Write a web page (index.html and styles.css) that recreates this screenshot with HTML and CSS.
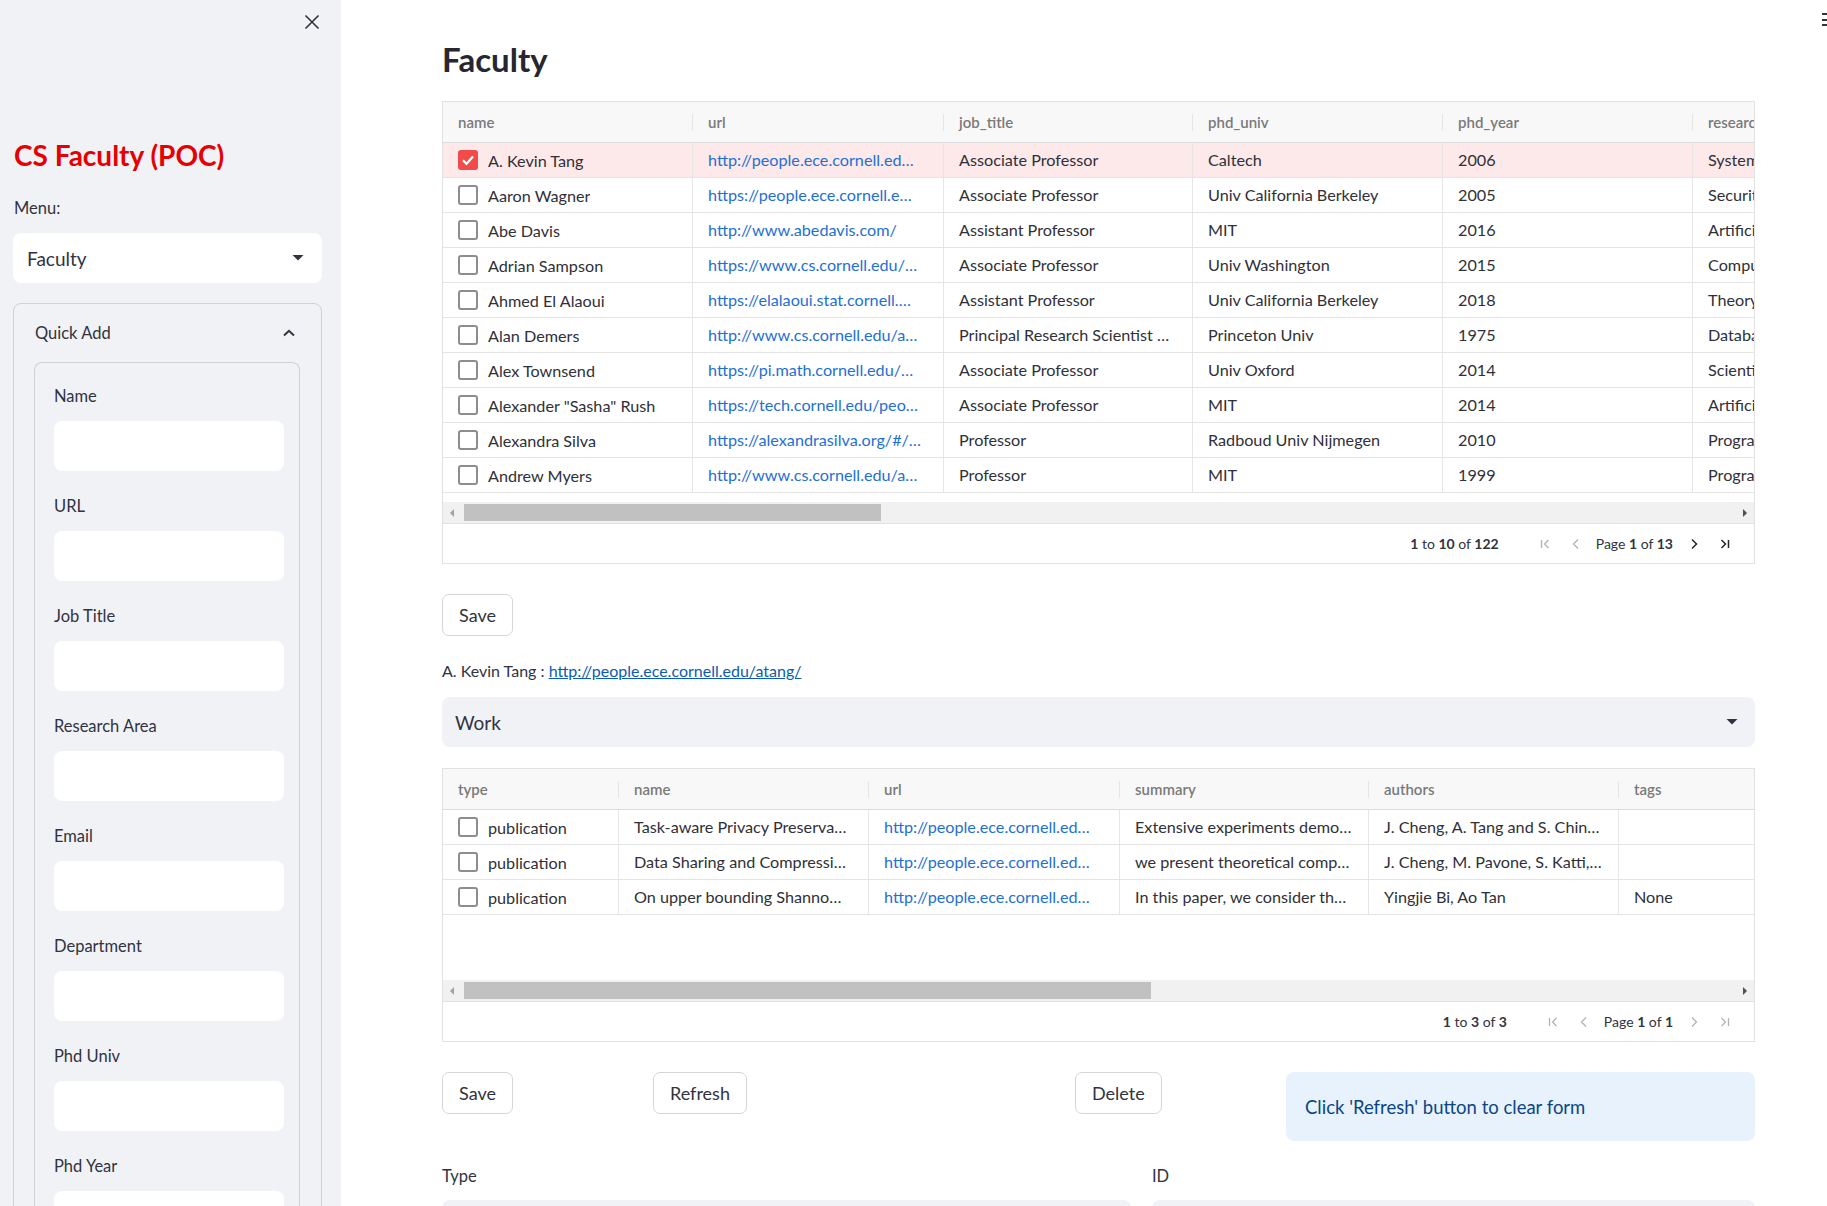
FILE: index.html
```html
<!DOCTYPE html>
<html lang="en">
<head>
<meta charset="utf-8">
<title>Faculty</title>
<link rel="stylesheet" href="styles.css">
</head>
<body>
<div class="app">
  <aside class="sidebar">
    <div class="sb-top">
      <svg class="close" width="16" height="16" viewBox="0 0 16 16"><path d="M1.5 1.5 L14.5 14.5 M14.5 1.5 L1.5 14.5" stroke="#31333f" stroke-width="1.6" fill="none"/></svg>
    </div>
    <h2 class="brand">CS Faculty (POC)</h2>
    <div class="sb-label">Menu:</div>
    <div class="select select-white">
      <span>Faculty</span>
      <svg width="12" height="6" viewBox="0 0 12 6"><path d="M0.5 0 L11.5 0 L6 5.5 Z" fill="#31333f"/></svg>
    </div>
    <div class="expander">
      <div class="exp-head">
        <span>Quick Add</span>
        <svg width="12" height="8" viewBox="0 0 12 8"><path d="M1 6.5 L6 1.8 L11 6.5" stroke="#31333f" stroke-width="2" fill="none"/></svg>
      </div>
      <div class="exp-body">
        <div class="form">
          <div class="field"><div class="field-label">Name</div><div class="input"></div></div>
          <div class="field"><div class="field-label">URL</div><div class="input"></div></div>
          <div class="field"><div class="field-label">Job Title</div><div class="input"></div></div>
          <div class="field"><div class="field-label">Research Area</div><div class="input"></div></div>
          <div class="field"><div class="field-label">Email</div><div class="input"></div></div>
          <div class="field"><div class="field-label">Department</div><div class="input"></div></div>
          <div class="field"><div class="field-label">Phd Univ</div><div class="input"></div></div>
          <div class="field"><div class="field-label">Phd Year</div><div class="input"></div></div>
        </div>
      </div>
    </div>
  </aside>

  <main class="main">
    <div class="menu-icon"><i></i><i></i><i></i></div>
    <h1 class="title">Faculty</h1>

    <div class="grid g1">
      <div class="row head">
        <div class="cell">name</div>
        <div class="cell">url</div>
        <div class="cell">job_title</div>
        <div class="cell">phd_univ</div>
        <div class="cell">phd_year</div>
        <div class="cell">research_area</div>
      </div>
      <div class="viewport">
        <div class="row selected">
          <div class="cell first"><span class="cb checked"><svg width="16" height="16" viewBox="0 0 16 16"><path d="M3 8.3 L6.5 11.8 L13 4.5" stroke="#fff" stroke-width="2.2" fill="none"/></svg></span><span class="txt">A. Kevin Tang</span></div>
          <div class="cell link">http://people.ece.cornell.ed…</div>
          <div class="cell">Associate Professor</div>
          <div class="cell">Caltech</div>
          <div class="cell">2006</div>
          <div class="cell">Systems</div>
        </div>
        <div class="row">
          <div class="cell first"><span class="cb"></span><span class="txt">Aaron Wagner</span></div>
          <div class="cell link">https://people.ece.cornell.e…</div>
          <div class="cell">Associate Professor</div>
          <div class="cell">Univ California Berkeley</div>
          <div class="cell">2005</div>
          <div class="cell">Security</div>
        </div>
        <div class="row">
          <div class="cell first"><span class="cb"></span><span class="txt">Abe Davis</span></div>
          <div class="cell link">http://www.abedavis.com/</div>
          <div class="cell">Assistant Professor</div>
          <div class="cell">MIT</div>
          <div class="cell">2016</div>
          <div class="cell">Artificial Intelligence</div>
        </div>
        <div class="row">
          <div class="cell first"><span class="cb"></span><span class="txt">Adrian Sampson</span></div>
          <div class="cell link">https://www.cs.cornell.edu/…</div>
          <div class="cell">Associate Professor</div>
          <div class="cell">Univ Washington</div>
          <div class="cell">2015</div>
          <div class="cell">Computer Architecture</div>
        </div>
        <div class="row">
          <div class="cell first"><span class="cb"></span><span class="txt">Ahmed El Alaoui</span></div>
          <div class="cell link">https://elalaoui.stat.cornell.…</div>
          <div class="cell">Assistant Professor</div>
          <div class="cell">Univ California Berkeley</div>
          <div class="cell">2018</div>
          <div class="cell">Theory</div>
        </div>
        <div class="row">
          <div class="cell first"><span class="cb"></span><span class="txt">Alan Demers</span></div>
          <div class="cell link">http://www.cs.cornell.edu/a…</div>
          <div class="cell">Principal Research Scientist …</div>
          <div class="cell">Princeton Univ</div>
          <div class="cell">1975</div>
          <div class="cell">Databases</div>
        </div>
        <div class="row">
          <div class="cell first"><span class="cb"></span><span class="txt">Alex Townsend</span></div>
          <div class="cell link">https://pi.math.cornell.edu/…</div>
          <div class="cell">Associate Professor</div>
          <div class="cell">Univ Oxford</div>
          <div class="cell">2014</div>
          <div class="cell">Scientific Computing</div>
        </div>
        <div class="row">
          <div class="cell first"><span class="cb"></span><span class="txt">Alexander "Sasha" Rush</span></div>
          <div class="cell link">https://tech.cornell.edu/peo…</div>
          <div class="cell">Associate Professor</div>
          <div class="cell">MIT</div>
          <div class="cell">2014</div>
          <div class="cell">Artificial Intelligence</div>
        </div>
        <div class="row">
          <div class="cell first"><span class="cb"></span><span class="txt">Alexandra Silva</span></div>
          <div class="cell link">https://alexandrasilva.org/#/…</div>
          <div class="cell">Professor</div>
          <div class="cell">Radboud Univ Nijmegen</div>
          <div class="cell">2010</div>
          <div class="cell">Programming Languages</div>
        </div>
        <div class="row">
          <div class="cell first"><span class="cb"></span><span class="txt">Andrew Myers</span></div>
          <div class="cell link">http://www.cs.cornell.edu/a…</div>
          <div class="cell">Professor</div>
          <div class="cell">MIT</div>
          <div class="cell">1999</div>
          <div class="cell">Programming Languages</div>
        </div>
      </div>
      <div class="hscroll">
        <span class="arrow left"></span>
        <span class="thumb" style="width:417px"></span>
        <span class="arrow right"></span>
      </div>
      <div class="pager">
        <span class="summary"><b>1</b> to <b>10</b> of <b>122</b></span>
        <svg class="pg off" width="16" height="16" viewBox="0 0 16 16"><path d="M4.5 4 V12 M11.5 4 L7.5 8 L11.5 12" stroke-width="1.3" fill="none"/></svg>
        <svg class="pg off gap15" width="16" height="16" viewBox="0 0 16 16"><path d="M10 3.5 L5.5 8 L10 12.5" stroke-width="1.3" fill="none"/></svg>
        <span class="pageinfo">Page <b>1</b> of <b>13</b></span>
        <svg class="pg on" width="16" height="16" viewBox="0 0 16 16"><path d="M6 3.5 L10.5 8 L6 12.5" stroke-width="1.5" fill="none"/></svg>
        <svg class="pg on gap15" width="16" height="16" viewBox="0 0 16 16"><path d="M4.5 4 L8.5 8 L4.5 12 M11.5 4 V12" stroke-width="1.5" fill="none"/></svg>
      </div>
    </div>

    <button class="btn save1">Save</button>

    <p class="detail">A. Kevin Tang : <a href="#">http://people.ece.cornell.edu/atang/</a></p>

    <div class="select select-gray">
      <span>Work</span>
      <svg width="12" height="6" viewBox="0 0 12 6"><path d="M0.5 0 L11.5 0 L6 5.5 Z" fill="#31333f"/></svg>
    </div>

    <div class="grid g2">
      <div class="row head">
        <div class="cell">type</div>
        <div class="cell">name</div>
        <div class="cell">url</div>
        <div class="cell">summary</div>
        <div class="cell">authors</div>
        <div class="cell">tags</div>
      </div>
      <div class="viewport">
        <div class="row">
          <div class="cell first"><span class="cb"></span><span class="txt">publication</span></div>
          <div class="cell">Task-aware Privacy Preserva…</div>
          <div class="cell link">http://people.ece.cornell.ed…</div>
          <div class="cell">Extensive experiments demo…</div>
          <div class="cell">J. Cheng, A. Tang and S. Chin…</div>
          <div class="cell"></div>
        </div>
        <div class="row">
          <div class="cell first"><span class="cb"></span><span class="txt">publication</span></div>
          <div class="cell">Data Sharing and Compressi…</div>
          <div class="cell link">http://people.ece.cornell.ed…</div>
          <div class="cell">we present theoretical comp…</div>
          <div class="cell">J. Cheng, M. Pavone, S. Katti,…</div>
          <div class="cell"></div>
        </div>
        <div class="row">
          <div class="cell first"><span class="cb"></span><span class="txt">publication</span></div>
          <div class="cell">On upper bounding Shanno…</div>
          <div class="cell link">http://people.ece.cornell.ed…</div>
          <div class="cell">In this paper, we consider th…</div>
          <div class="cell">Yingjie Bi, Ao Tan</div>
          <div class="cell">None</div>
        </div>
      </div>
      <div class="hscroll">
        <span class="arrow left"></span>
        <span class="thumb" style="width:687px"></span>
        <span class="arrow right"></span>
      </div>
      <div class="pager">
        <span class="summary"><b>1</b> to <b>3</b> of <b>3</b></span>
        <svg class="pg off" width="16" height="16" viewBox="0 0 16 16"><path d="M4.5 4 V12 M11.5 4 L7.5 8 L11.5 12" stroke-width="1.3" fill="none"/></svg>
        <svg class="pg off gap15" width="16" height="16" viewBox="0 0 16 16"><path d="M10 3.5 L5.5 8 L10 12.5" stroke-width="1.3" fill="none"/></svg>
        <span class="pageinfo">Page <b>1</b> of <b>1</b></span>
        <svg class="pg off" width="16" height="16" viewBox="0 0 16 16"><path d="M6 3.5 L10.5 8 L6 12.5" stroke-width="1.3" fill="none"/></svg>
        <svg class="pg off gap15" width="16" height="16" viewBox="0 0 16 16"><path d="M4.5 4 L8.5 8 L4.5 12 M11.5 4 V12" stroke-width="1.3" fill="none"/></svg>
      </div>
    </div>

    <div class="actions">
      <div><button class="btn">Save</button></div>
      <div><button class="btn">Refresh</button></div>
      <div></div>
      <div><button class="btn">Delete</button></div>
      <div class="info">Click 'Refresh' button to clear form</div>
    </div>

    <div class="form-row">
      <div class="mfield"><div class="field-label">Type</div><div class="input gray"></div></div>
      <div class="mfield"><div class="field-label">ID</div><div class="input gray"></div></div>
    </div>
  </main>
</div>
</body>
</html>
```

FILE: styles.css
```css
* { box-sizing: border-box; }

html, body {
  margin: 0;
  padding: 0;
  height: 100%;
}

body {
  font-family: "Lato", "Open Sans", sans-serif;
  color: #31333f;
  background: #ffffff;
  overflow: hidden;
}

.app {
  display: flex;
  height: 100vh;
  overflow: hidden;
}

/* ---------- Sidebar ---------- */
.sidebar {
  width: 341px;
  flex: 0 0 341px;
  height: 100vh;
  overflow: hidden;
  background: #f0f2f6;
  padding: 0 19px 0 13px;
}

.sb-top {
  height: 139px;
  display: flex;
  justify-content: flex-end;
  align-items: flex-start;
  padding-top: 14px;
  padding-right: 2px;
}

.brand {
  margin: 0;
  font-size: 28px;
  line-height: 32px;
  font-weight: 700;
  color: #e60000;
  padding-left: 1px;
}

.sb-label {
  margin-top: 25px;
  font-size: 16.5px;
  line-height: 24px;
  padding-left: 1px;
}

.select {
  display: flex;
  align-items: center;
  justify-content: space-between;
  height: 50px;
  border-radius: 8px;
  font-size: 19px;
}

.select-white {
  margin-top: 13px;
  background: #ffffff;
  padding: 0 18px 0 14px;
}

.expander {
  margin-top: 20px;
  border: 1px solid #cfd1d7;
  border-radius: 8px;
}

.exp-head {
  height: 58px;
  display: flex;
  align-items: center;
  justify-content: space-between;
  padding: 0 26px 0 21px;
  font-size: 16.5px;
}

.exp-body {
  padding: 0 21px 0 20px;
}

.form {
  border: 1px solid #cfd1d7;
  border-radius: 8px;
  border-bottom: none;
  padding: 21px 15px 0 19px;
  height: 900px;
}

.field {
  margin-bottom: 23px;
}

.field-label {
  font-size: 16.5px;
  line-height: 24px;
  margin-bottom: 13px;
}

.input {
  height: 50px;
  background: #ffffff;
  border-radius: 8px;
}

.input.gray {
  background: #f0f2f6;
}

/* ---------- Main ---------- */
.main {
  position: relative;
  flex: 1;
  min-width: 0;
  padding: 39px 72px 0 101px;
}

.menu-icon {
  position: absolute;
  top: 13px;
  right: -3px;
  width: 8px;
  display: flex;
  flex-direction: column;
  gap: 3.5px;
}

.menu-icon i {
  display: block;
  height: 2px;
  background: #31333f;
}

.title {
  margin: 0 0 22px;
  font-size: 33px;
  line-height: 40px;
  font-weight: 700;
  color: #262730;
}

/* ---------- Data grid ---------- */
.grid {
  border: 1px solid #e2e2e2;
  overflow: hidden;
  font-size: 16.2px;
  color: #2f3038;
}

.row {
  display: grid;
  height: 35px;
  border-bottom: 1px solid #e4e4e4;
  width: max-content;
}

.g1 .row { grid-template-columns: 249px 251px 249px 250px 250px 250px; }
.g2 .row { grid-template-columns: 175px 250px 251px 249px 250px 250px; }

.row.head {
  height: 41px;
  background: #f8f8f9;
  border-bottom: 1px solid #dcdcdc;
  width: 100%;
  overflow: hidden;
}

.g1 .row.head { grid-template-columns: 249px 251px 249px 250px 250px 250px; }
.g2 .row.head { grid-template-columns: 175px 250px 251px 249px 250px 250px; }

.cell {
  display: flex;
  align-items: center;
  padding: 0 16px 0 15px;
  border-left: 1px solid #e6e6e6;
  white-space: nowrap;
  overflow: hidden;
  text-overflow: ellipsis;
  min-width: 0;
}

.cell:first-child {
  border-left: none;
  padding-left: 15px;
}

.head .cell {
  position: relative;
  border-left: none;
  padding-left: 16px;
  font-size: 15px;
  font-weight: 600;
  color: #7a7a7a;
}

.head .cell:first-child { padding-left: 15px; }

.head .cell + .cell::before {
  content: "";
  position: absolute;
  left: 0;
  top: 12px;
  width: 1px;
  height: 17px;
  background: #e5e5e5;
}

.cell.first { gap: 10px; }

.txt {
  overflow: hidden;
  text-overflow: ellipsis;
}

.cell.link { color: #1f6fd6; display: block; line-height: 34px; }

.row .cell:not(.first):not(.link) { display: block; line-height: 34px; }
.head .cell { line-height: 40px !important; }

.row.selected { background: #fde9e9; }

.cb {
  flex: 0 0 20px;
  width: 20px;
  height: 20px;
  border: 2px solid #8d8d8d;
  border-radius: 3px;
  background: #ffffff;
  display: inline-flex;
  align-items: center;
  justify-content: center;
}

.cb.checked {
  background: #f24b4b;
  border-color: #f24b4b;
}

.viewport {
  overflow: hidden;
}

.g1 .viewport { height: 359px; }
.g2 .viewport { height: 170px; }

.hscroll {
  height: 21px;
  background: #f1f1f1;
  display: flex;
  align-items: center;
}

.arrow {
  width: 17px;
  height: 21px;
  position: relative;
  flex: 0 0 17px;
}

.arrow.left::before,
.arrow.right::before {
  content: "";
  position: absolute;
  top: 7px;
  width: 0;
  height: 0;
  border-top: 4px solid transparent;
  border-bottom: 4px solid transparent;
}

.arrow.left::before {
  left: 7px;
  border-right: 4px solid #a3a3a3;
}

.arrow.right { margin-left: auto; }

.arrow.right::before {
  left: 6px;
  border-left: 4px solid #505050;
}

.thumb {
  display: block;
  height: 17px;
  margin-left: 4px;
  background: #c1c1c1;
}

.pager {
  height: 40px;
  border-top: 1px solid #e2e2e2;
  display: flex;
  align-items: center;
  justify-content: flex-end;
  padding-right: 21px;
  font-size: 14px;
  color: #31333f;
}

.pager b { font-weight: 700; }

.summary { margin-right: 38px; }

.pg { flex: 0 0 16px; }
.pg.off { stroke: #b3b3b3; }
.pg.on { stroke: #262626; }
.pg.gap15 { margin-left: 15px; }

.pageinfo { margin: 0 13px 0 12px; }

/* ---------- Buttons and text ---------- */
.btn {
  font-family: inherit;
  font-size: 18px;
  color: #31333f;
  background: #ffffff;
  border: 1px solid #d5d6da;
  border-radius: 7px;
  height: 42px;
  padding: 0 16px;
  cursor: pointer;
}

.save1 {
  display: block;
  margin-top: 30px;
  width: 71px;
}

.detail {
  margin: 23px 0 0;
  font-size: 16px;
  line-height: 24px;
}

.detail a { color: #0b5cb5; }

.select-gray {
  margin-top: 14px;
  background: #f0f2f6;
  padding: 0 17px 0 13px;
}

.g2 { margin-top: 21px; }

.actions {
  margin-top: 30px;
  display: grid;
  grid-template-columns: 196px 196px 196px 196px 1fr;
  column-gap: 15px;
  align-items: start;
}

.info {
  height: 69px;
  background: #e8f2fc;
  color: #0b4584;
  border-radius: 8px;
  padding: 0 19px;
  display: flex;
  align-items: center;
  font-size: 18.5px;
}

.form-row {
  margin-top: 23px;
  display: grid;
  grid-template-columns: 689px 1fr;
  column-gap: 21px;
}

.mfield .field-label { margin-bottom: 12px; }
```
